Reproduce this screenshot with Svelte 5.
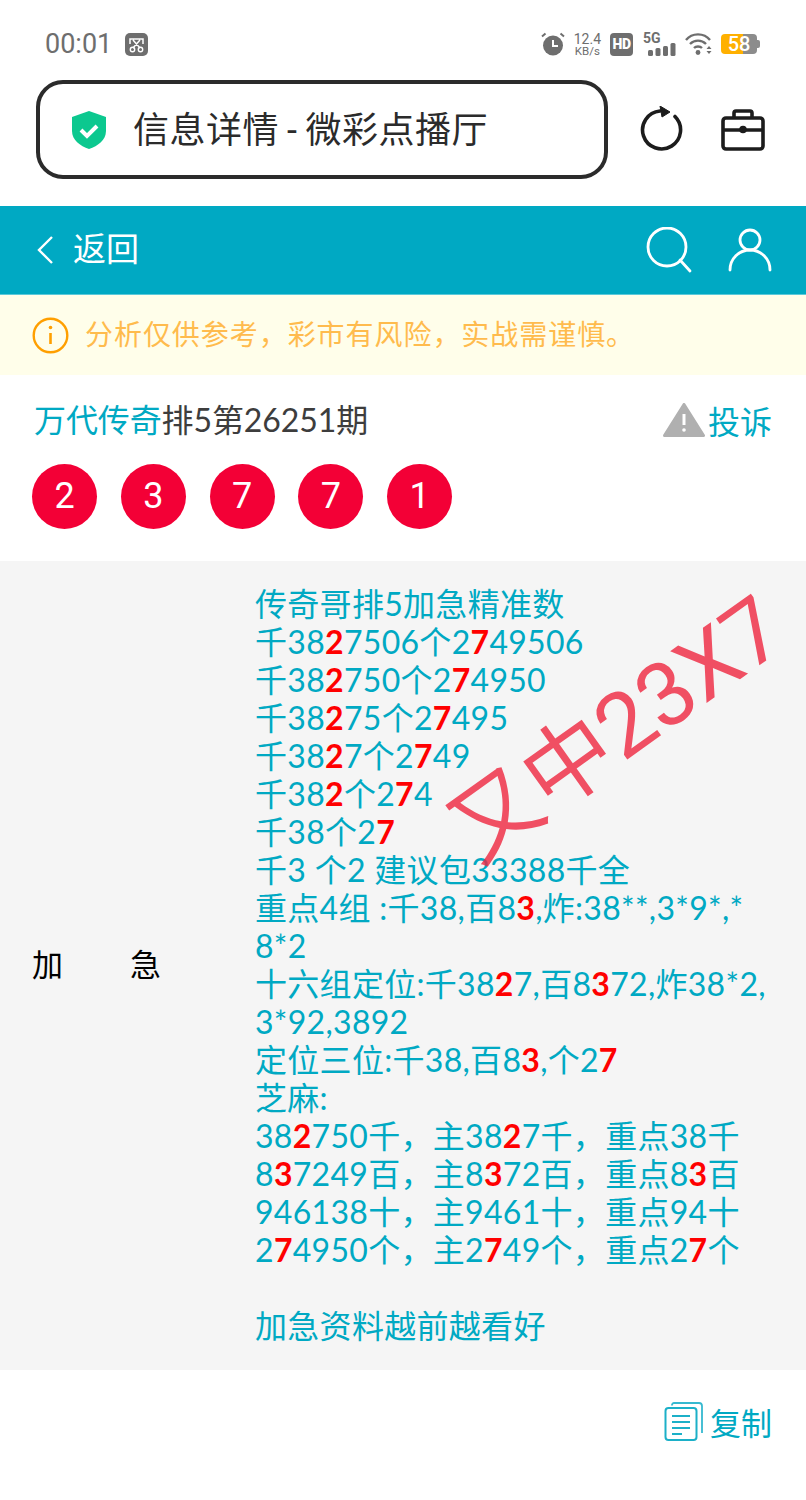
<script>
  const balls = [2, 3, 7, 7, 1];
  // each line is a list of [text, isRed] runs
  const lines = [
    [["传奇哥排5加急精准数", 0]],
    [["千38", 0], ["2", 1], ["7506个2", 0], ["7", 1], ["49506", 0]],
    [["千38", 0], ["2", 1], ["750个2", 0], ["7", 1], ["4950", 0]],
    [["千38", 0], ["2", 1], ["75个2", 0], ["7", 1], ["495", 0]],
    [["千38", 0], ["2", 1], ["7个2", 0], ["7", 1], ["49", 0]],
    [["千38", 0], ["2", 1], ["个2", 0], ["7", 1], ["4", 0]],
    [["千38个2", 0], ["7", 1]],
    [["千3 个2 建议包33388千全", 0]],
    [["重点4组 :千38,百8", 0], ["3", 1], [",炸:38**,3*9*,*", 0]],
    [["8*2", 0]],
    [["十六组定位:千38", 0], ["2", 1], ["7,百8", 0], ["3", 1], ["72,炸38*2,", 0]],
    [["3*92,3892", 0]],
    [["定位三位:千38,百8", 0], ["3", 1], [",个2", 0], ["7", 1]],
    [["芝麻:", 0]],
    [["38", 0], ["2", 1], ["750千，主38", 0], ["2", 1], ["7千，重点38千", 0]],
    [["8", 0], ["3", 1], ["7249百，主8", 0], ["3", 1], ["72百，重点8", 0], ["3", 1], ["百", 0]],
    [["946138十，主9461十，重点94十", 0]],
    [["2", 0], ["7", 1], ["4950个，主2", 0], ["7", 1], ["49个，重点2", 0], ["7", 1], ["个", 0]],
    [["\u00a0", 0]],
    [["加急资料越前越看好", 0]]
  ];
</script>

<div class="page">
  <div class="status">
    <div class="status-left">
      <span class="time">00:01</span>
      <svg class="shot" width="23" height="23" viewBox="0 0 23 23">
        <rect width="23" height="23" rx="5" fill="#6e6e6e" />
        <path d="M5 11V6h13v5M8 7l7 8M15 7l-7 8" fill="none" stroke="#fff" stroke-width="1.5" />
        <circle cx="7.5" cy="16.5" r="2.2" fill="none" stroke="#fff" stroke-width="1.4" />
        <circle cx="15.5" cy="16.5" r="2.2" fill="none" stroke="#fff" stroke-width="1.4" />
      </svg>
    </div>
    <div class="status-right">
      <svg width="24" height="24" viewBox="0 0 24 24">
        <circle cx="12" cy="13.5" r="10" fill="#6e6e6e" />
        <path d="M12 8v6h5" fill="none" stroke="#fff" stroke-width="2" />
        <path d="M1 4.500 4.500 1.500M23 4.500 19.500 1.500" stroke="#6e6e6e" stroke-width="2" />
      </svg>
      <div class="speed"><span>12.4</span><span class="unit">KB/s</span></div>
      <div class="hd">HD</div>
      <div class="net">
        <span class="five">5G</span>
        <svg width="28" height="13" viewBox="0 0 28 13">
          <rect x="0" y="7" width="5" height="6" rx="1.500" fill="#6e6e6e" />
          <rect x="7.500" y="5" width="5" height="8" rx="1.500" fill="#6e6e6e" />
          <rect x="15" y="3" width="5" height="10" rx="1.500" fill="#6e6e6e" />
          <rect x="22.500" y="0" width="5" height="13" rx="1.500" fill="#6e6e6e" />
        </svg>
      </div>
      <svg width="28" height="22" viewBox="0 0 28 22">
        <path d="M1 7C7-.5 19-.5 25 7M5 11C9.500 6.500 16.500 6.500 21 11M9 15C11 13 15 13 17 15" fill="none" stroke="#6e6e6e" stroke-width="2.400" />
        <circle cx="13" cy="19.500" r="2.400" fill="#6e6e6e" />
        <path d="M24 13l2.500 3h-5zM24 21l-2.500-3h5z" fill="#6e6e6e" />
      </svg>
      <div class="battery"><span>58</span></div>
    </div>
  </div>

  <div class="address">
    <div class="url-box">
      <svg width="36" height="38" viewBox="0 0 36 38">
        <path d="M18 0 35 6v14c0 9-8 15-17 18C9 35 1 29 1 20V6z" fill="#0cc88f" />
        <path d="M10 19l6 6 10-10" fill="none" stroke="#fff" stroke-width="4" />
      </svg>
      <span class="url-title">信息详情<span class="dash">-</span>微彩点播厅</span>
    </div>
    <svg class="tool" width="44" height="46" viewBox="0 0 44 46">
      <path d="M35 10.500A19 19 0 1 1 20 5" fill="none" stroke="#1c1c1c" stroke-width="3.600" stroke-linecap="round" />
      <path d="M20 0l10 6-8 5z" fill="#1c1c1c" stroke="#1c1c1c" stroke-width="1" stroke-linejoin="round" />
    </svg>
    <svg class="tool" width="44" height="42" viewBox="0 0 44 42">
      <rect x="2" y="9" width="40" height="31" rx="3" fill="none" stroke="#1c1c1c" stroke-width="3.600" />
      <path d="M13 8V4a2 2 0 0 1 2-2h14a2 2 0 0 1 2 2v4M2 21h40" fill="none" stroke="#1c1c1c" stroke-width="3.600" />
      <circle cx="22" cy="20.500" r="3.800" fill="#1c1c1c" />
    </svg>
  </div>

  <header class="nav">
    <div class="back">
      <svg width="18" height="30" viewBox="0 0 18 30">
        <path d="M16 2 3 15l13 13" fill="none" stroke="#fff" stroke-width="2.400" />
      </svg>
      <span>返回</span>
    </div>
    <div class="nav-icons">
      <svg width="46" height="46" viewBox="0 0 46 46">
        <circle cx="21" cy="20" r="19" fill="none" stroke="#fff" stroke-width="2.800" />
        <path d="M34 33l10 11" stroke="#fff" stroke-width="2.800" stroke-linecap="round" />
      </svg>
      <svg width="44" height="44" viewBox="0 0 44 44">
        <circle cx="22" cy="12" r="10" fill="none" stroke="#fff" stroke-width="2.800" />
        <path d="M2 42a20 20 0 0 1 40 0" fill="none" stroke="#fff" stroke-width="2.800" stroke-linecap="round" />
      </svg>
    </div>
  </header>

  <div class="notice">
    <svg width="37" height="37" viewBox="0 0 37 37">
      <circle cx="18.500" cy="18.500" r="16.800" fill="none" stroke="#ff9f00" stroke-width="2.400" />
      <path d="M18.500 16v11" stroke="#ff9f00" stroke-width="2.600" />
      <circle cx="18.500" cy="10.500" r="1.800" fill="#ff9f00" />
    </svg>
    <span>分析仅供参考，彩市有风险，实战需谨慎。</span>
  </div>

  <div class="issue">
    <div class="issue-title"><span class="author">万代传奇</span>排5第26251期</div>
    <div class="report">
      <svg width="42" height="34" viewBox="0 0 42 34">
        <path d="M21 1.500 40.500 32.500H1.500z" fill="#b0b0b0" stroke="#b0b0b0" stroke-width="3" stroke-linejoin="round" />
        <path d="M21 11v11" stroke="#fff" stroke-width="3" />
        <circle cx="21" cy="27" r="1.800" fill="#fff" />
      </svg>
      <span>投诉</span>
    </div>
  </div>

  <div class="balls">
    {#each balls as n}
      <div class="ball">{n}</div>
    {/each}
  </div>

  <section class="detail">
    <div class="label"><span>加</span><span>急</span></div>
    <div class="content">
      {#each lines as line}
        <div>{#each line as [text, red]}{#if red}<b>{text}</b>{:else}{text}{/if}{/each}</div>
      {/each}
    </div>
    <div class="stamp">又中23X7</div>
  </section>

  <div class="copy">
    <svg width="40" height="40" viewBox="0 0 40 40">
      <path d="M8 3.500V3a2 2 0 0 1 2-2h25a3 3 0 0 1 3 3v27" fill="none" stroke="#36b9d0" stroke-width="1.800" transform="translate(0 1)" />
      <rect x="1.500" y="7" width="31" height="32" rx="3" fill="none" stroke="#1cb0c8" stroke-width="2" />
      <path d="M8 15h18M8 21h18M8 27h18M8 33h10" stroke="#1cb0c8" stroke-width="2" />
    </svg>
    <span>复制</span>
  </div>
</div>

<style>
  :global(body) {
    margin: 0;
    background: #fff;
  }

  .page {
    width: 806px;
    height: 1500px;
    overflow: hidden;
    background: #fff;
    font-family: Roboto, "Noto Sans CJK SC", sans-serif;
  }

  .status {
    height: 80px;
    box-sizing: border-box;
    padding: 28px 45px 0;
    display: flex;
    justify-content: space-between;
    align-items: flex-start;
  }

  .status-left {
    display: flex;
    align-items: center;
    gap: 13px;
    height: 32px;
  }

  .time {
    font-size: 27px;
    color: #6e6e6e;
  }

  .status-right {
    display: flex;
    align-items: center;
    gap: 9px;
    height: 32px;
    margin-right: 4px;
  }

  .speed {
    display: flex;
    flex-direction: column;
    align-items: center;
    color: #6e6e6e;
    font-size: 14px;
    line-height: 14px;
  }

  .unit {
    font-size: 11.500px;
    line-height: 11px;
  }

  .hd {
    width: 23px;
    height: 23px;
    border-radius: 4px;
    background: #6e6e6e;
    color: #fff;
    font-size: 14px;
    font-weight: 900;
    line-height: 23px;
    text-align: center;
    letter-spacing: -0.500px;
  }

  .net {
    position: relative;
    width: 33px;
    height: 24px;
    margin-left: 1px;
  }

  .net svg {
    position: absolute;
    right: 0;
    bottom: 0;
  }

  .five {
    position: absolute;
    left: 0;
    top: -2px;
    color: #6e6e6e;
    font-size: 14px;
    font-weight: 700;
  }

  .battery {
    width: 36px;
    height: 20px;
    border-radius: 4px;
    background: linear-gradient(90deg, #ffb000 0 60%, #8c8c8c 60% 100%);
    color: #fff;
    text-align: center;
    font-size: 20px;
    font-weight: 500;
    line-height: 20px;
    position: relative;
    margin-left: -1px;
  }

  .battery::after {
    content: "";
    position: absolute;
    right: -3px;
    top: 6px;
    width: 3px;
    height: 8px;
    border-radius: 0 2px 2px 0;
    background: #8c8c8c;
  }

  .address {
    height: 126px;
    box-sizing: border-box;
    padding: 0 41px 0 36px;
    display: flex;
    align-items: flex-start;
  }

  .url-box {
    width: 573px;
    height: 99px;
    box-sizing: border-box;
    border: 4.500px solid #2b2b2b;
    border-radius: 27px;
    display: flex;
    align-items: center;
    padding-left: 31px;
    gap: 26px;
  }

  .url-title {
    font-size: 36px;
    color: #2b2b2b;
    white-space: nowrap;
    letter-spacing: 0.500px;
    line-height: 40px;
    margin-top: 3px;
  }

  .dash {
    margin: 0 8px;
  }

  .tool {
    margin-top: 26px;
    flex: none;
  }

  .url-box + .tool {
    margin-left: 32px;
  }

  .tool + .tool {
    margin-left: 37px;
    margin-top: 29px;
  }

  .nav {
    height: 88px;
    background: #00a9c3;
    border-bottom: 1px solid #5cc9d9;
    padding: 0 34px 0 36px;
    display: flex;
    align-items: center;
    justify-content: space-between;
  }

  .back {
    display: flex;
    align-items: center;
    gap: 19px;
    color: #fff;
    font-size: 33px;
    line-height: 40px;
  }

  .nav-icons {
    display: flex;
    align-items: center;
    gap: 36px;
  }

  .notice {
    height: 80px;
    background: #fffeea;
    display: flex;
    align-items: center;
    gap: 16px;
    padding-left: 32px;
    color: #ffbb4d;
    font-size: 28px;
    letter-spacing: 0.950px;
  }

  .notice span {
    margin-top: -4px;
  }

  .issue {
    height: 89px;
    box-sizing: border-box;
    padding: 0 34px;
    display: flex;
    align-items: center;
    justify-content: space-between;
    font-size: 32px;
  }

  .issue-title {
    color: #3d3d3d;
    font-family: Lato, "Noto Sans CJK SC", sans-serif;
    letter-spacing: -0.100px;
    margin-top: -3px;
  }

  .author {
    color: #00a9c3;
  }

  .report {
    display: flex;
    align-items: center;
    gap: 3px;
    color: #00a9c3;
  }

  .balls {
    display: flex;
    gap: 23.750px;
    height: 97px;
    padding-left: 32px;
  }

  .ball {
    width: 65px;
    height: 65px;
    border-radius: 50%;
    background: #f30036;
    color: #fff;
    font-size: 36px;
    line-height: 65px;
    text-align: center;
  }

  .detail {
    position: relative;
    height: 809px;
    background: #f5f5f5;
    display: grid;
    grid-template-columns: 255px 1fr;
    align-items: center;
  }

  .label {
    display: flex;
    gap: 67px;
    padding-left: 32px;
    color: #000;
    font-size: 31px;
    height: 38px;
    line-height: 38px;
    align-items: center;
  }

  .content {
    color: #00a9c3;
    font-family: Lato, "Noto Sans CJK SC", sans-serif;
    font-size: 32px;
    line-height: 38px;
    letter-spacing: 0.300px;
    padding-bottom: 2px;
    white-space: nowrap;
  }

  .content b {
    color: #ff0000;
    font-weight: 700;
  }

  .stamp {
    position: absolute;
    left: 425px;
    top: 124px;
    color: #f0263f;
    opacity: 0.8;
    font-size: 89px;
    line-height: 90px;
    white-space: nowrap;
    transform: rotate(-35.500deg);
    transform-origin: center;
  }

  .copy {
    display: flex;
    justify-content: flex-end;
    align-items: center;
    gap: 6px;
    height: 102px;
    padding: 0 34px 4px 0;
    color: #00a9c3;
    font-size: 31px;
  }
</style>
